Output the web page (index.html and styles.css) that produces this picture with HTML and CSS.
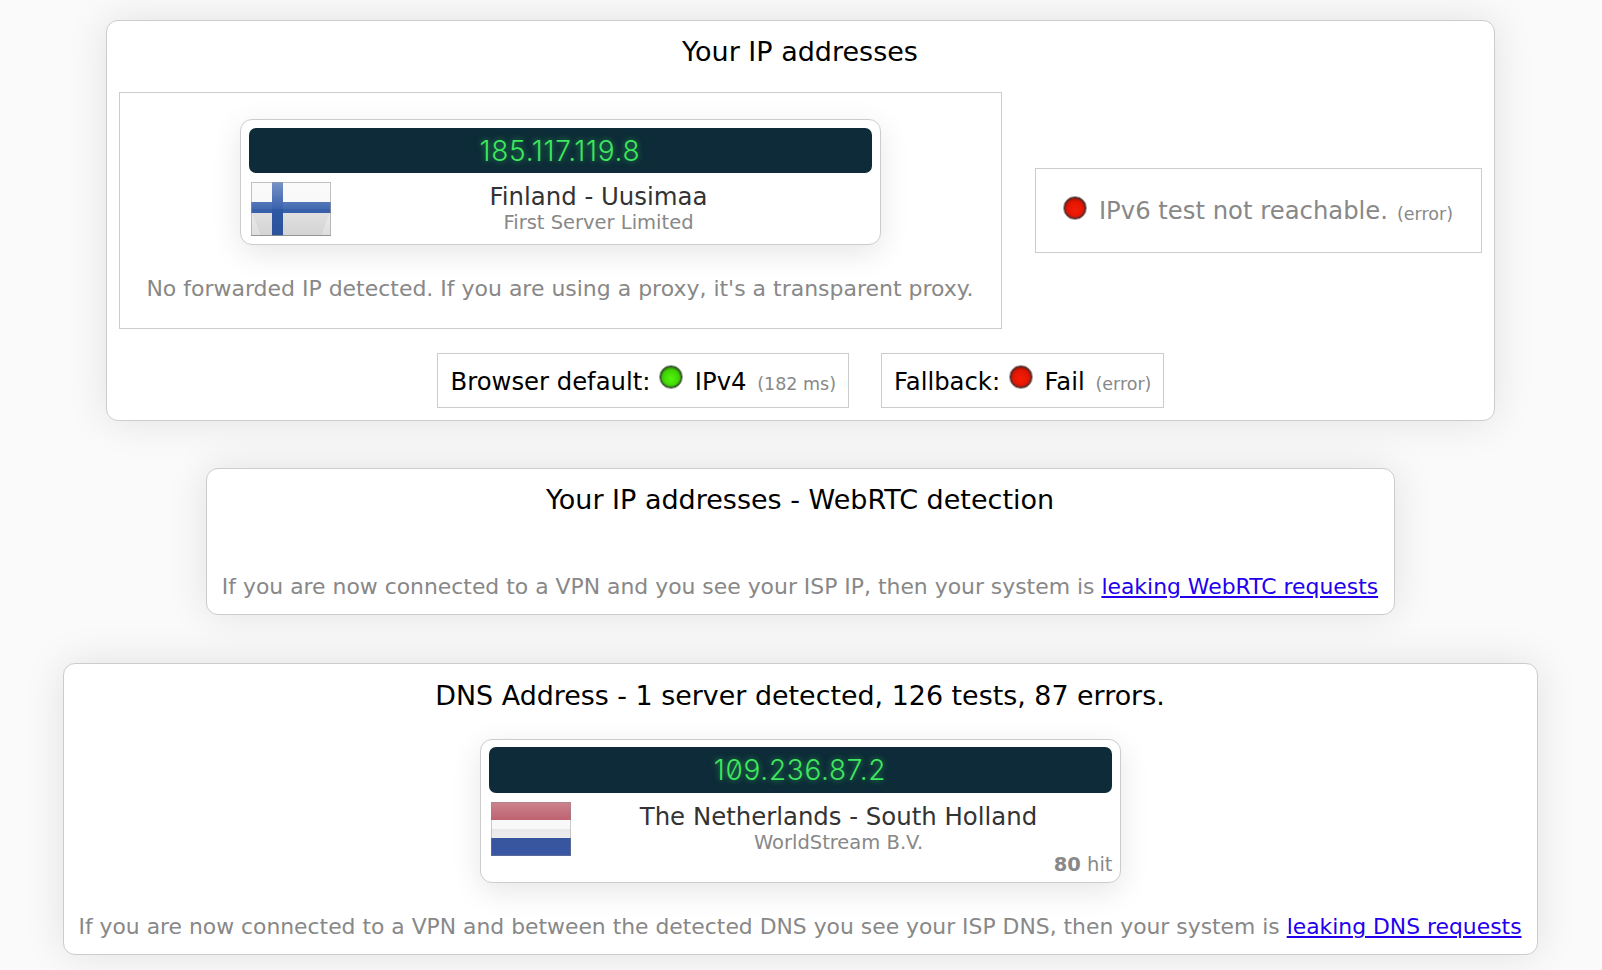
FILE: index.html
```html
<!DOCTYPE html>
<html lang="en">
<head>
    <meta charset="UTF-8">
    <title>IP / DNS leak test</title>
    <link rel="stylesheet" href="styles.css">
</head>
<body>
    <!-- ip addresses -->
    <section class="box box-ip">
        <h2 class="box-title">Your IP addresses</h2>
        <div class="ip-row">
            <div class="frame frame-main">
                <div class="ip-card">
                    <div class="ip-value">185.117.119.8</div>
                    <div class="ip-info">
                        <svg class="flag" viewBox="0 0 80 54">
                            <defs>
                                <linearGradient id="glossFi" x1="0" y1="0" x2="0" y2="1">
                                    <stop offset="0" stop-color="#fff" stop-opacity=".35"/>
                                    <stop offset=".5" stop-color="#fff" stop-opacity=".05"/>
                                    <stop offset=".5" stop-color="#000" stop-opacity=".02"/>
                                    <stop offset="1" stop-color="#000" stop-opacity=".08"/>
                                </linearGradient>
                            </defs>
                            <rect width="80" height="54" fill="#f8f8f8"/>
                            <path d="M0 30H80V54H0Z" fill="#e6e6e6"/>
                            <path d="M0 30C6 40 8 50 10 54H0ZM80 30C74 40 72 50 70 54H80Z" fill="#f1f1f1"/>
                            <rect x="0" y="20" width="80" height="11" fill="#3a63ad"/>
                            <rect x="21" y="0" width="11" height="54" fill="#2f59a8"/>
                            <rect width="80" height="54" fill="url(#glossFi)"/>
                            <rect x=".5" y=".5" width="79" height="53" fill="none" stroke="#999" stroke-opacity=".6"/>
                            <path d="M0 53.5H80" stroke="#888" stroke-opacity=".7"/>
                        </svg>
                        <div class="ip-place">
                            <div class="place-name">Finland - Uusimaa</div>
                            <div class="place-isp">First Server Limited</div>
                        </div>
                    </div>
                </div>
                <p class="note note-forward">No forwarded IP detected. If you are using a proxy, it's a transparent proxy.</p>
            </div>
            <div class="frame frame-v6">
                <span class="led led-red"></span>
                <span class="v6-text">IPv6 test not reachable.</span>
                <span class="small">(error)</span>
            </div>
        </div>
        <div class="chips">
            <div class="frame chip">Browser default: <span class="led led-green"></span> IPv4 <span class="small">(182 ms)</span></div>
            <div class="frame chip chip-last">Fallback: <span class="led led-red"></span> Fail <span class="small">(error)</span></div>
        </div>
    </section>

    <!-- webrtc -->
    <section class="box box-rtc">
        <h2 class="box-title">Your IP addresses - WebRTC detection</h2>
        <p class="note note-rtc">If you are now connected to a VPN and you see your ISP IP, then your system is <a href="#">leaking WebRTC requests</a></p>
    </section>

    <!-- dns -->
    <section class="box box-dns">
        <h2 class="box-title">DNS Address - 1 server detected, 126 tests, 87 errors.</h2>
        <div class="ip-card ip-card-dns">
            <div class="ip-value">109.236.87.2</div>
            <div class="ip-info">
                <svg class="flag" viewBox="0 0 80 54">
                    <defs>
                        <linearGradient id="glossNl" x1="0" y1="0" x2="0" y2="1">
                            <stop offset="0" stop-color="#fff" stop-opacity=".32"/>
                            <stop offset=".5" stop-color="#fff" stop-opacity=".05"/>
                            <stop offset=".5" stop-color="#000" stop-opacity=".06"/>
                            <stop offset="1" stop-color="#000" stop-opacity=".02"/>
                        </linearGradient>
                    </defs>
                    <rect width="80" height="18" fill="#b4495a"/>
                    <rect y="18" width="80" height="18" fill="#f8f8f8"/>
                    <rect y="36" width="80" height="18" fill="#3a58a6"/>
                    <rect width="80" height="54" fill="url(#glossNl)"/>
                    <rect x=".5" y=".5" width="79" height="53" fill="none" stroke="#888" stroke-opacity=".4"/>
                </svg>
                <div class="ip-place">
                    <div class="place-name">The Netherlands - South Holland</div>
                    <div class="place-isp">WorldStream B.V.</div>
                </div>
            </div>
            <div class="hits"><b>80</b> hit</div>
        </div>
        <p class="note note-dns">If you are now connected to a VPN and between the detected DNS you see your ISP DNS, then your system is <a href="#">leaking DNS requests</a></p>
    </section>
</body>
</html>
```

FILE: styles.css
```css
body {
    font-family: "DejaVu Sans", Verdana, sans-serif;
    background-color: #fafafa;
    color: #000;
    margin: 0;
    padding: 20px 2px 0 0;
    height: 950px;
    overflow: hidden;
    display: flex;
    flex-direction: column;
    align-items: center;
}
.box {
    background-color: #fff;
    border: 1px solid #ccc;
    border-radius: 12px;
    box-shadow: 0 0 40px rgba(0, 0, 0, 0.1);
    box-sizing: border-box;
    flex: none;
    text-align: center;
}
.box-ip {
    width: 1389px;
    height: 401px;
    padding: 0 12px;
}
.box-rtc {
    width: 1189px;
    height: 147px;
    margin-top: 47px;
}
.box-dns {
    width: 1475px;
    height: 292px;
    margin-top: 48px;
}
.box-title {
    font-size: 27px;
    font-weight: normal;
    line-height: 30px;
    margin: 0;
    padding-top: 16px;
}
.box-dns .box-title {
    font-size: 26.9px;
    padding-top: 17px;
}
.frame {
    background-color: #fff;
    border: 1px solid #ccc;
    box-sizing: border-box;
}
.ip-row {
    display: flex;
    align-items: center;
    justify-content: space-between;
    margin-top: 25px;
}
.frame-main {
    width: 883px;
    height: 237px;
    padding-top: 26px;
}
.frame-v6 {
    width: 447px;
    height: 85px;
    font-size: 24.3px;
    color: #888;
    display: flex;
    align-items: center;
    justify-content: center;
}
.v6-text {
    margin-left: 12px;
}
.small {
    font-size: 17.5px;
    color: #888;
    margin-left: 9px;
    padding-top: 6px;
}
.led {
    display: inline-block;
    width: 24px;
    height: 24px;
    border-radius: 50%;
    box-sizing: border-box;
    border: 1px solid #999;
    box-shadow: inset 0 0 2px 1px #333;
    vertical-align: 1px;
}
.frame-v6 .led {
    margin-bottom: 6px;
}
.led-red {
    background: radial-gradient(circle at 50% 58%, #f61c06 0, #e21503 50%, #7a0900 100%);
}
.led-green {
    background: radial-gradient(circle at 50% 58%, #52f50a 0, #3fd406 50%, #1b6c00 100%);
}
.chips {
    display: flex;
    justify-content: center;
    gap: 32px;
    margin-top: 24px;
    padding-left: 1px;
}
.chip {
    height: 55px;
    font-size: 24.3px;
    line-height: 55px;
    padding: 0 12px 0 13px;
    white-space: nowrap;
}
.chip-last {
    padding: 0 12px;
}
.chip .led {
    margin: 0 4px 0 1px;
}
.chip .small {
    margin-left: 3px;
}
.ip-card {
    width: 641px;
    height: 126px;
    box-sizing: border-box;
    margin: 0 auto;
    padding: 8px;
    background-color: #fff;
    border: 1px solid #ccc;
    border-radius: 12px;
    box-shadow: 0 8px 30px rgba(0, 0, 0, 0.1);
}
.ip-card-dns {
    height: 144px;
    margin-top: 28px;
    padding-top: 7px;
    position: relative;
}
.ip-value {
    height: 45px;
    background-color: #0d2b38;
    border-radius: 7px;
    color: #3fe85e;
    font-family: "Inter", sans-serif;
    font-size: 28px;
    font-weight: 300;
    font-variant-numeric: slashed-zero;
    letter-spacing: 0.7px;
    line-height: 46px;
    text-shadow: 0 0 6px rgba(62, 228, 92, 0.6);
}
.ip-card-dns .ip-value {
    height: 46px;
}
.ip-info {
    display: flex;
    margin-top: 9px;
    padding-left: 2px;
}
.flag {
    width: 80px;
    height: 54px;
    flex: none;
}
.ip-place {
    flex: 1;
    padding: 1px 5px 0 0;
}
.place-name {
    font-size: 24.4px;
    line-height: 28px;
    color: #333;
}
.place-isp {
    font-size: 19.5px;
    line-height: 24px;
    color: #888;
}
.hits {
    position: absolute;
    right: 7px;
    bottom: 6px;
    font-size: 19.5px;
    color: #888;
}
.note {
    font-size: 21.87px;
    color: #888;
    margin: 0;
    white-space: nowrap;
}
.note-forward {
    font-size: 21.97px;
    margin-top: 31px;
}
.note-rtc {
    font-size: 21.9px;
    margin-top: 59px;
}
.note-dns {
    margin-top: 31px;
}
a {
    color: #2200ee;
}
```
